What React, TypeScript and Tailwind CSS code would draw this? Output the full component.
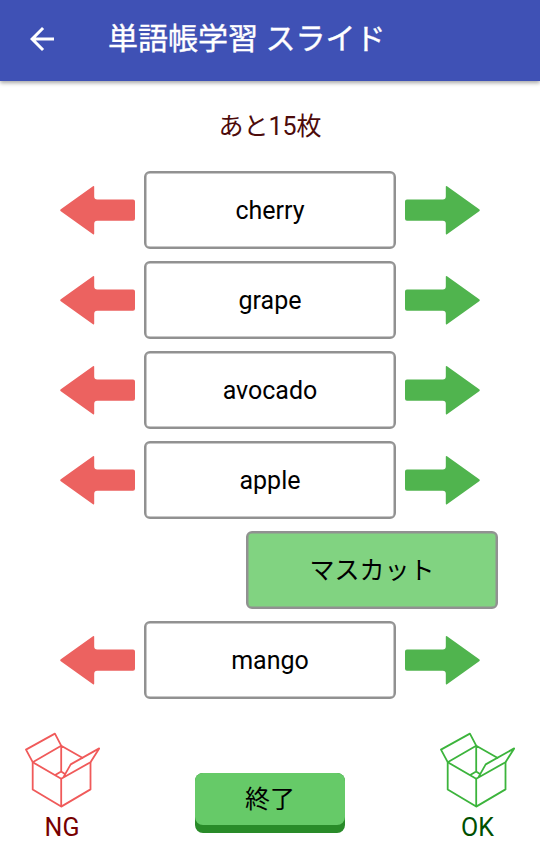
import React from "react";

const words = ["cherry", "grape", "avocado", "apple", null, "mango"];

function Arrow({ right = false }: { right?: boolean }) {
  return (
    <svg
      viewBox="0 0 75 50"
      className={right ? "h-[50px] w-[75px] -scale-x-100 text-[#50b44e]" : "h-[50px] w-[75px] text-[#ec6260]"}
      fill="currentColor"
    >
      <path d="M.8 24.2 L33 1.2 Q34.2 .4 34.2 1.8 V11.5 Q34.2 14.5 37.2 14.5 H73 Q75 14.5 75 16.5 V33.8 Q75 35.8 73 35.8 H37.2 Q34.2 35.8 34.2 38.8 V48.6 Q34.2 50 33 49.2 L.8 26.2 Q-.4 25.2 .8 24.2Z" />
    </svg>
  );
}

function OpenBox({ className }: { className: string }) {
  return (
    <svg
      viewBox="-.7 -1.4 76 76"
      className={"h-[76px] w-[76px] " + className}
      fill="none"
      stroke="currentColor"
      strokeWidth="1.8"
      strokeLinejoin="round"
    >
      <path d="M8 28.8 L36.5 12.3 L30.2 .2 L1.3 16.2 L8 28.8 L36.5 45.3 L65.8 28.8 L74.5 15 L46 31 L38.5 44.2" />
      <path d="M8 28.8 V56 L36.5 73.2 L65.8 56 V28.8 M36.5 45.3 V73.2 M36.5 12.3 V38 L30.5 41.7 M36.5 38 L40.2 40.5 M36.5 12.3 L58.5 24.8" />
    </svg>
  );
}

export default function App() {
  return (
    <div className="flex h-[846px] w-[540px] flex-col overflow-hidden bg-white font-[Roboto,'Noto_Sans_CJK_JP',sans-serif] text-[25px] leading-[30px] text-black">
      <header className="flex h-[81px] shrink-0 items-center bg-[#3f51b5] pb-1 text-white shadow-[0_2px_4px_rgba(0,0,0,0.35)]">
        <svg viewBox="0 0 24 24" className="ml-[24px] h-9 w-9" fill="currentColor">
          <path d="M20 11H7.83l5.59-5.59L12 4l-8 8 8 8 1.41-1.41L7.83 13H20v-2z" />
        </svg>
        <h1 className="ml-12 text-[30px] font-normal [-webkit-text-stroke:0.4px_white]">単語帳学習 スライド</h1>
      </header>

      <p className="mt-[31px] text-center text-[#4d0b0b]">あと15枚</p>

      <main className="mt-[29px] flex flex-col gap-3">
        {words.map((word) =>
          word ? (
            <div key={word} className="flex h-[78px] items-center justify-center gap-[9px]">
              <Arrow />
              <div className="flex h-[78px] w-[252px] items-center justify-center rounded-[6px] border-2 border-[#919191] bg-white pt-0.5 shadow-[inset_0_0_0_0.5px_#919191]">
                {word}
              </div>
              <Arrow right />
            </div>
          ) : (
            <div
              key="answer"
              className="ml-[246px] flex h-[78px] w-[252px] items-center justify-center rounded-[6px] border-2 border-[#919191] bg-[#81d381] pt-0.5 shadow-[inset_0_0_0_0.5px_#919191]"
            >
              マスカット
            </div>
          ),
        )}
      </main>

      <footer className="mt-[33px] flex items-start justify-between pr-[25px] pl-6">
        <div className="flex flex-col items-center text-[#780000]">
          <OpenBox className="text-[#f05a5a]" />
          <span className="mt-[5px]">NG</span>
        </div>
        <button className="mt-[41px] ml-px flex h-[60px] w-[150px] rounded-[8px] bg-[#298b29]">
          <span className="flex h-[52px] w-full items-center justify-center rounded-[8px] bg-[#66ca68] pt-0.5">終了</span>
        </button>
        <div className="flex flex-col items-center text-[#005000]">
          <OpenBox className="text-[#3cb43c]" />
          <span className="mt-[5px] ml-px">OK</span>
        </div>
      </footer>
    </div>
  );
}
